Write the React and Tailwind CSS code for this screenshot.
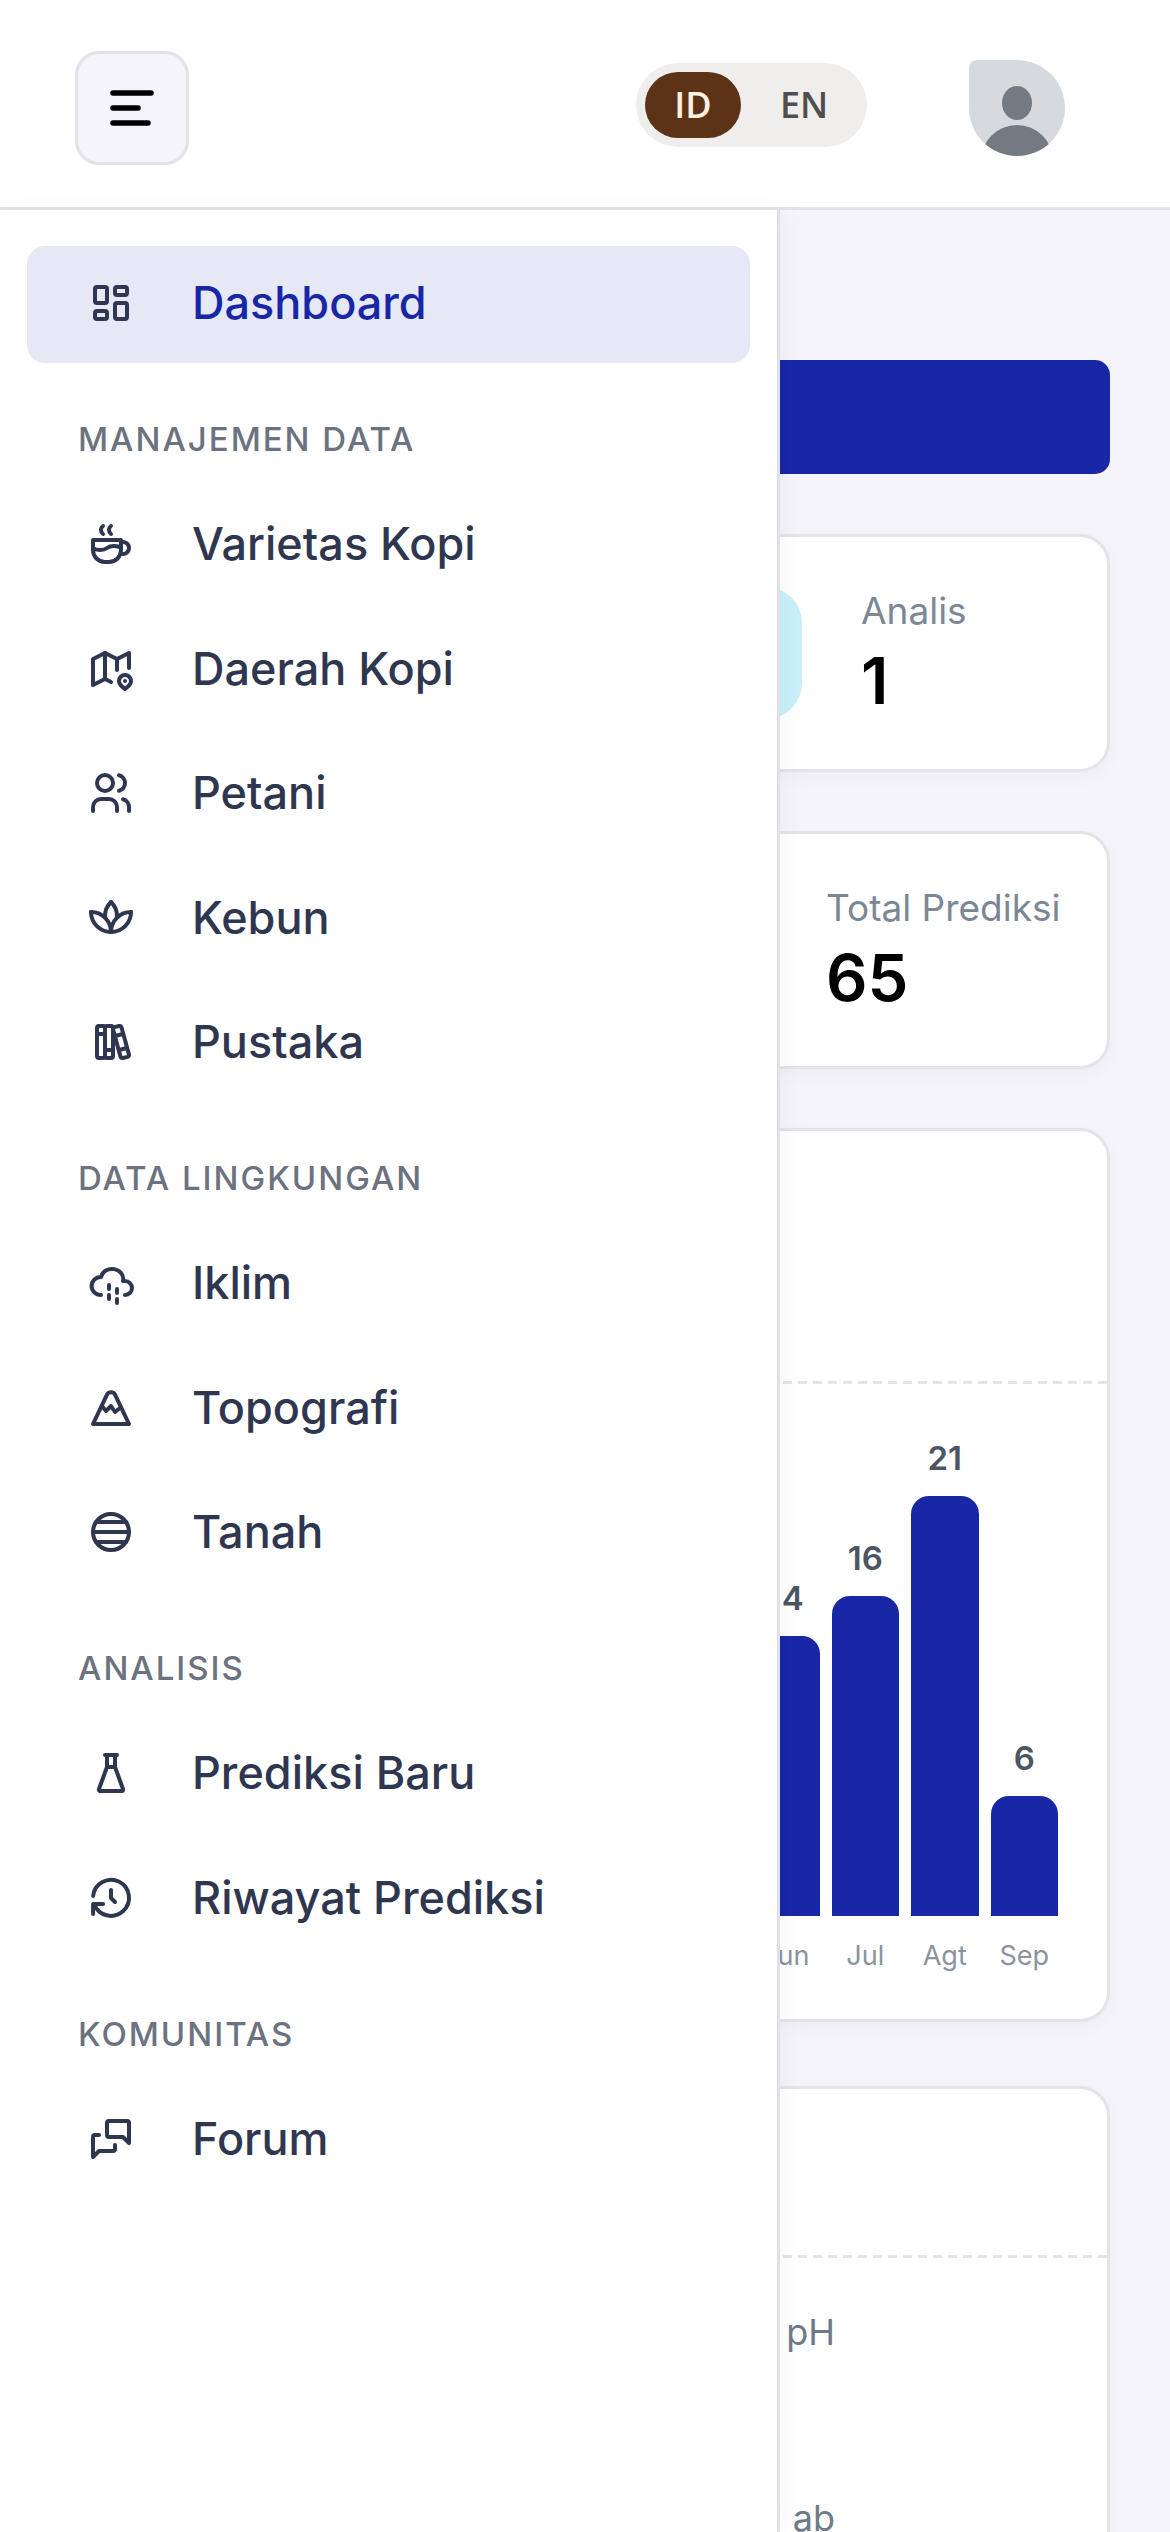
import React from 'react';
import {
  TbLayoutDashboard, TbCoffee, TbMap2, TbUsers, TbPlant2, TbBooks,
  TbCloudRain, TbMountain, TbFlask, TbHistory, TbMessages,
} from 'react-icons/tb';

const TanahIcon = (props) => (
  <svg viewBox="0 0 24 24" fill="none" stroke="currentColor" strokeWidth="2" strokeLinecap="round" {...props}>
    <circle cx="12" cy="12" r="9" />
    <path d="M4.5 7h15M3 12h18M4.5 17h15" />
  </svg>
);

const sections = [
  { title: 'Manajemen Data', items: [
    { label: 'Varietas Kopi', icon: TbCoffee },
    { label: 'Daerah Kopi', icon: TbMap2 },
    { label: 'Petani', icon: TbUsers },
    { label: 'Kebun', icon: TbPlant2 },
    { label: 'Pustaka', icon: TbBooks },
  ] },
  { title: 'Data Lingkungan', items: [
    { label: 'Iklim', icon: TbCloudRain },
    { label: 'Topografi', icon: TbMountain },
    { label: 'Tanah', icon: TanahIcon },
  ] },
  { title: 'Analisis', items: [
    { label: 'Prediksi Baru', icon: TbFlask },
    { label: 'Riwayat Prediksi', icon: TbHistory },
  ] },
  { title: 'Komunitas', items: [
    { label: 'Forum', icon: TbMessages },
  ] },
];

const bars = [
  { month: 'Jun', value: 14 },
  { month: 'Jul', value: 16 },
  { month: 'Agt', value: 21 },
  { month: 'Sep', value: 6 },
];

const cardClass = 'bg-white border-[3px] border-[#e2e4e9] rounded-[30px] shadow-[0_6px_18px_rgba(0,0,0,0.03)]';
const dashedLine = 'h-[3px] bg-[repeating-linear-gradient(90deg,#e2e4e9_0,#e2e4e9_9px,transparent_9px,transparent_15px)]';

const NavItem = ({ icon: Icon, label, active }) => (
  <a className={`flex items-center h-[117px] mb-[7.5px] pl-[60px] pb-[3px] rounded-[18px] text-[45px] font-medium ${active ? 'bg-[#e6e8f5] text-[#1727a6]' : 'text-[#2f3650]'}`}>
    <Icon className="w-[48px] h-[48px] shrink-0 text-[#2f3650]" />
    <span className="ml-[57px]">{label}</span>
  </a>
);

const StatCard = ({ label, value, pad }) => (
  <div className={`${cardClass} h-[238px] flex items-center gap-[59px] ${pad}`}>
    <div className="w-[132px] h-[132px] rounded-[36px] bg-[#c9eff8] shrink-0" />
    <div>
      <div className="text-[37px] leading-[48px] text-[#7c8796]">{label}</div>
      <div className="mt-[7px] text-[65px] leading-[78px] font-semibold text-black">{value}</div>
    </div>
  </div>
);

export default function App() {
  return (
    <div className="relative w-[1170px] h-[2532px] overflow-hidden bg-[#f4f4fa] font-['Inter',sans-serif]">
      <header className="h-[210px] bg-white border-b-[3px] border-[#e2e3e8] flex items-center pl-[75px] pr-[105px]">
        <button className="w-[114px] h-[114px] mt-[9px] rounded-[24px] border-[3px] border-[#e2e3e8] bg-[#f4f4fa] flex items-center justify-center">
          <svg viewBox="0 0 44 36" className="w-[44px] h-[36px]" fill="none" stroke="black" strokeWidth="5.5" strokeLinecap="round">
            <path d="M3 3h38M3 18h25M3 33h35" />
          </svg>
        </button>
        <div className="ml-auto w-[231px] h-[84px] mt-[3px] rounded-full bg-[#efeeec] flex items-center pl-[9px] font-['Open_Sans',sans-serif] text-[36px] font-semibold">
          <span className="w-[96px] h-[66px] rounded-full bg-[#5c3317] text-[#fdf1e1] flex items-center justify-center">ID</span>
          <span className="ml-[39px] text-[#4f4f4f]">EN</span>
        </div>
        <div className="ml-[102px] w-[96px] h-[96px] mt-[9px] rounded-[48px] rounded-tl-[8px] overflow-hidden bg-[#d6d9de]">
          <svg viewBox="0 0 96 96" className="w-[96px] h-[96px]">
            <ellipse cx="48" cy="43" rx="15" ry="17" fill="#737a82" />
            <ellipse cx="48" cy="101" rx="36" ry="36" fill="#737a82" />
          </svg>
        </div>
      </header>

      <main className="px-[60px] pt-[150px]">
        <div className="h-[114px] rounded-[15px] bg-[#1727a6]" />
        <div className="grid grid-cols-2 gap-x-[60px] gap-y-[59px] mt-[60px]">
          <StatCard label="Petani" value="0" pad="pl-[53px]" />
          <StatCard label="Analis" value="1" pad="pl-[52px]" />
          <StatCard label="Kebun" value="0" pad="pl-[17px]" />
          <StatCard label="Total Prediksi" value="65" pad="pl-[17px]" />
        </div>

        <section className={`${cardClass} h-[894px] mt-[59px]`}>
          <div className="h-[250px]" />
          <div className={dashedLine} />
          <div className="h-[532px] pr-[49px] flex items-end justify-end gap-[12px]">
            {bars.map((bar) => (
              <div key={bar.month} className="w-[67.5px] flex flex-col items-center">
                <span className="text-[33px] leading-[40px] mb-[18px] font-semibold text-[#4b5563]">{bar.value}</span>
                <div className="w-full rounded-t-[18px] bg-[#1727a6]" style={{ height: bar.value * 20 }} />
              </div>
            ))}
          </div>
          <div className="pr-[49px] mt-[22px] flex justify-end gap-[12px]">
            {bars.map((bar) => (
              <span key={bar.month} className="w-[67.5px] text-center text-[27px] leading-[36px] text-[#8a93a0]">{bar.month}</span>
            ))}
          </div>
        </section>

        <section className={`${cardClass} h-[600px] mt-[64px]`}>
          <div className="h-[166px]" />
          <div className={dashedLine} />
          <div className="w-[772px] text-right text-[36px] leading-[48px] text-[#6f7a88]">
            <div className="mt-[50px]">pH</div>
            <div className="mt-[138px]">ab</div>
          </div>
        </section>
      </main>

      <aside className="absolute left-0 top-[210px] bottom-0 w-[780px] bg-white border-r-[3px] border-[#dfe1e6] px-[27px] pt-[36px] shadow-[6px_0_24px_rgba(0,0,0,0.03)]">
        <div className="w-[723px]">
          <NavItem icon={TbLayoutDashboard} label="Dashboard" active />
          {sections.map((section) => (
            <div key={section.title} className="mt-[52px]">
              <h3 className="h-[48px] mb-[24px] pl-[51px] text-[33px] leading-[48px] font-medium uppercase tracking-[0.06em] text-[#6b7280]">{section.title}</h3>
              {section.items.map((item) => (
                <NavItem key={item.label} icon={item.icon} label={item.label} />
              ))}
            </div>
          ))}
        </div>
      </aside>
    </div>
  );
}
